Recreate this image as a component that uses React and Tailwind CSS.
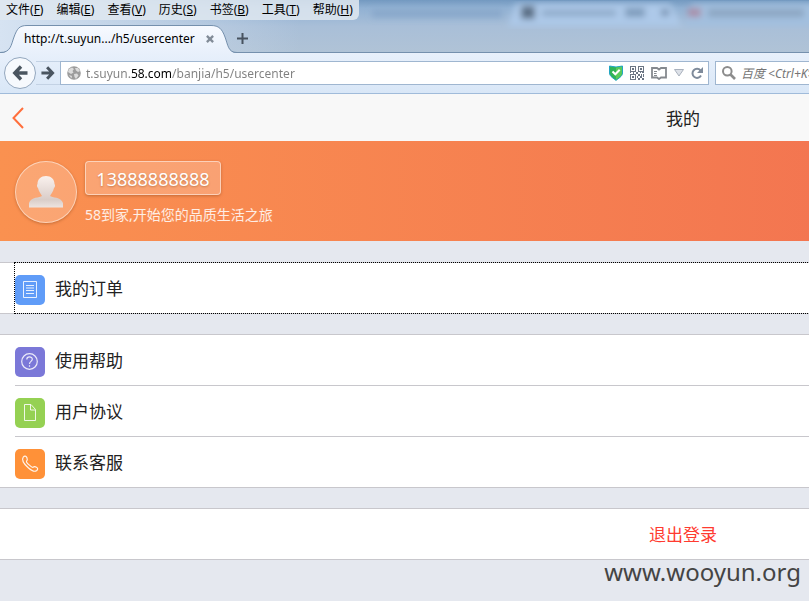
import React from 'react';

const menus = [
    { label: '文件', accessKey: 'F' },
    { label: '编辑', accessKey: 'E' },
    { label: '查看', accessKey: 'V' },
    { label: '历史', accessKey: 'S' },
    { label: '书签', accessKey: 'B' },
    { label: '工具', accessKey: 'T' },
    { label: '帮助', accessKey: 'H' },
];

function MenuBar() {
    return (
        <div className="relative flex h-5 items-center">
            <nav className="flex h-5 items-center gap-[13px] rounded-br-md bg-[#dfe7f0]/85 pl-1.5 pr-1.5 text-xs leading-5 text-black">
                {menus.map((menu) => (
                    <button key={menu.label} type="button" className="whitespace-nowrap">
                        {menu.label}(<span className="underline">{menu.accessKey}</span>)
                    </button>
                ))}
            </nav>
        </div>
    );
}

function GlassBackdrop() {
    return (
        <svg className="absolute inset-0 h-full w-full" aria-hidden="true">
            <defs>
                <linearGradient id="glass" x1="0" y1="0" x2="0" y2="1">
                    <stop offset="0" stopColor="#7399c0" />
                    <stop offset="0.15" stopColor="#91b1d3" />
                    <stop offset="0.5" stopColor="#a9bfd8" />
                    <stop offset="1" stopColor="#b0c3d6" />
                </linearGradient>
                <linearGradient id="glassLeft" x1="0" y1="0" x2="1" y2="0">
                    <stop offset="0" stopColor="#d6e3f2" />
                    <stop offset="1" stopColor="#d6e3f2" stopOpacity="0" />
                </linearGradient>
                <filter id="soft">
                    <feGaussianBlur stdDeviation="3" />
                </filter>
            </defs>
            <rect width="100%" height="100%" fill="url(#glass)" />
            <rect width="300" height="100%" fill="url(#glassLeft)" />
            <g filter="url(#soft)">
                <path d="M508 26 L516 4 H670 L682 26 Z" fill="#adc9e9" />
                <path d="M684 26 L692 4 H860 V26 Z" fill="#a3c0df" />
                <rect x="521" y="6" width="14" height="13" fill="#5c6f86" />
                <rect x="542" y="10" width="74" height="6" fill="#8ca8c7" />
                <rect x="625" y="8" width="20" height="9" fill="#7e9bbb" />
                <rect x="661" y="9" width="8" height="7" fill="#7893b2" />
                <rect x="688" y="8" width="13" height="9" fill="#a98fa9" />
                <rect x="708" y="9" width="96" height="8" fill="#8ba5c1" />
                <rect x="372" y="10" width="130" height="7" fill="#86a6c9" />
            </g>
        </svg>
    );
}

function TabStrip() {
    return (
        <div className="relative flex h-[33px] items-end border-b border-[#7590ad]">
            <div className="relative -mb-px flex h-7 w-[237px] items-center pl-6">
                <svg className="absolute inset-0 h-7 w-[237px]" viewBox="0 0 237 28" fill="none" aria-hidden="true">
                    <defs>
                        <linearGradient id="tab" x1="0" y1="0" x2="0" y2="1">
                            <stop offset="0" stopColor="#f7faff" />
                            <stop offset="1" stopColor="#e8f0fb" />
                        </linearGradient>
                    </defs>
                    <path
                        d="M0 28 C11 28 11 20 14 12 C17 4 19 .5 27 .5 H211 C219 .5 222 4 225 12 C228 20 228 28 237 28 Z"
                        fill="url(#tab)"
                    />
                    <path
                        d="M0 27.5 C11 27.5 11 20 14 12 C17 4 19 .5 27 .5 H211 C219 .5 222 4 225 12 C228 20 228 27.5 237 27.5"
                        stroke="#7590ad"
                    />
                </svg>
                <span className="relative w-[174px] whitespace-nowrap text-xs text-black">
                    http://t.suyun.../h5/usercenter
                </span>
                <button type="button" aria-label="关闭标签页" className="relative ml-2">
                    <svg width="8" height="8" viewBox="0 0 9 9" stroke="#828c98" strokeWidth="2.6">
                        <path d="M1 1 L8 8 M8 1 L1 8" />
                    </svg>
                </button>
            </div>
            <button type="button" aria-label="新标签页" className="relative mb-2 flex">
                <svg width="11" height="11" viewBox="0 0 11 11" stroke="#47525f" strokeWidth="2">
                    <path d="M5.5 0 V11 M0 5.5 H11" />
                </svg>
            </button>
        </div>
    );
}

function Arrow({ className }) {
    return (
        <svg className={className} viewBox="0 0 16 16" fill="none" stroke="#4a5560" strokeWidth="3.4" aria-hidden="true">
            <path d="M9 1.5 L2.8 8 L9 14.5 M3.5 8 H15.5" />
        </svg>
    );
}

function AddressIcons() {
    return (
        <div className="flex shrink-0 items-center gap-[7px]">
            <svg width="14" height="16" viewBox="0 0 14 16" aria-label="安全">
                <path d="M.5 1 L7 2 L13.5 1 V8 C13.5 11.5 9 13.500 7 15.5 C5 13.500 .5 11.5 .5 8 Z" fill="#2fb457" stroke="#22a5c4" />
                <path d="M7 2.500 L13 1.800 V8 C13 11 9 13 7 14.800 Z" fill="#58ca5a" />
                <path d="M3.500 6.500 L6.300 9.300 L10.700 4.800" fill="none" stroke="#fff" strokeWidth="2" />
            </svg>
            <svg width="14" height="14" viewBox="0 0 14 14" fill="#6b7583" aria-label="二维码">
                <path fillRule="evenodd" d="M0 0 H6 V6 H0 Z M1 1 V5 H5 V1 Z M8 0 H14 V6 H8 Z M9 1 V5 H13 V1 Z M0 8 H6 V14 H0 Z M1 9 V13 H5 V9 Z" />
                <path d="M2 2h2v2h-2z M10 2h2v2h-2z M2 10h2v2h-2z M8 8h2v2h-2z M11 8h1v2h-1z M13 8h1v3h-1z M7 10h1v2h-1z M10 10h2v2h-2z M8 12h2v2h-2z M12 12h2v2h-2z M6 6h2v2h-2z M0 6h1v1h-1z M3 6h1v2h-1z M10 6h1v1h-1z M12 6h2v1h-2z" />
            </svg>
            <svg width="16" height="13" viewBox="0 0 16 13" fill="none" stroke="#85898e" aria-label="阅读模式">
                <path d="M1 1 H6 L8 2.500 L10 1 H15 V10.500 H10 L8 12 L6 10.500 H1 Z" strokeWidth="1.8" />
                <path d="M3 4.500 H6 M3 6.500 H5.500 M3 8.500 H6" />
            </svg>
            <svg width="10" height="8" viewBox="0 0 10 8" aria-label="历史记录">
                <path d="M.5 .5 H9.500 L5 7 Z" fill="#dde1e8" stroke="#a9b1bd" />
            </svg>
            <button type="button" aria-label="刷新" className="flex">
                <svg width="12" height="12" viewBox="0 0 12 12" fill="none">
                    <path d="M9.500 3.500 A4.500 4.500 0 1 0 10 8.500" stroke="#7f8b9b" strokeWidth="2" />
                    <path d="M12 0 V6 H6 Z" fill="#7f8b9b" />
                </svg>
            </button>
        </div>
    );
}

function Toolbar() {
    return (
        <div className="flex h-[41px] items-center border-b border-[#a0bbda] bg-linear-to-b from-[#e8f0fb] to-[#d9e7f7] pl-1">
            <button
                type="button"
                aria-label="后退"
                className="flex h-8 w-8 shrink-0 items-center justify-center rounded-full border border-[#93a7be] bg-[#f6f9fd]"
            >
                <Arrow className="h-4 w-4" />
            </button>
            <button type="button" aria-label="前进" className="flex h-6 w-6 shrink-0 items-center justify-center border-y border-[#c3d2e4]">
                <Arrow className="h-3.5 w-3.5 rotate-180" />
            </button>
            <div className="flex h-6 w-[649px] shrink-0 items-center border border-[#9fb6d0] bg-white pl-1.5 pr-[5px]">
                <svg className="mr-[5px] h-3.5 w-3.5 shrink-0" viewBox="0 0 14 14" aria-hidden="true">
                    <circle cx="7" cy="7" r="6.800" fill="#9c9c9c" />
                    <path d="M2 3 L5 1.500 L7 3 L5.500 5 L6.500 6.500 L4 8 L1 6 Z M8 2 L11 2 L13 5 L11 6 L9 4.500 Z M7 8 L10 7.500 L11.500 9.500 L9 13 L7.500 11 Z M2 9 L5 10 L4.500 12.500 Z" fill="#dcdcdc" />
                </svg>
                {/* the gradient darkens only the domain part of the address */}
                <input
                    type="text"
                    aria-label="地址"
                    defaultValue="t.suyun.58.com/banjia/h5/usercenter"
                    className="min-w-0 flex-1 bg-[linear-gradient(to_right,#808080_44px,#000_44px,#000_86px,#808080_86px)] bg-clip-text pt-0.5 text-xs text-transparent caret-black outline-none"
                />
                <AddressIcons />
            </div>
            <label className="ml-1.5 flex h-6 w-60 shrink-0 items-center border border-[#9fb6d0] bg-white pl-1.5">
                <svg className="mr-[5px] h-3.5 w-3.5 shrink-0" viewBox="0 0 14 14" fill="none" stroke="#8c8c8c" aria-label="搜索">
                    <circle cx="5.300" cy="5.300" r="4.300" strokeWidth="2" />
                    <path d="M8.500 8.500 L13 13" strokeWidth="2.600" />
                </svg>
                <input
                    type="text"
                    placeholder="百度 <Ctrl+K>"
                    className="w-full bg-transparent pt-0.5 text-xs italic outline-none placeholder:text-[#757575]"
                />
            </label>
        </div>
    );
}

function PageHeader() {
    return (
        <header className="flex h-[47px] items-center bg-[#f8f8f8] px-3">
            <a href="#back" aria-label="返回" className="w-3">
                <svg className="h-[22px] w-3" viewBox="0 0 12 22" fill="none" stroke="#ff6f3c" strokeWidth="2">
                    <path d="M11 1 L1.500 11 L11 21" />
                </svg>
            </a>
            <h1 className="flex-1 pr-3 pt-0.5 text-center text-[17px] leading-6 text-[#222]">我的</h1>
        </header>
    );
}

function ProfileBanner() {
    return (
        <section className="flex h-[100px] items-start bg-linear-to-r from-[#fa9150] to-[#ee6250] px-[15px] pt-5">
            <div className="flex h-[62px] w-[62px] items-center justify-center rounded-full border border-white/50 bg-white/20 shadow-[0_1px_3px_rgba(120,60,20,0.4)]">
                <svg className="h-8 w-[34px]" viewBox="0 0 34 32" aria-hidden="true">
                    <defs>
                        <linearGradient id="person" x1="0" y1="0" x2="0" y2="1">
                            <stop offset="0" stopColor="#faf1ee" />
                            <stop offset="0.75" stopColor="#d9cdc8" />
                            <stop offset="1" stopColor="#ede4e0" />
                        </linearGradient>
                    </defs>
                    <path
                        d="M17 0 C22 0 25.500 3 25.500 8 C26.500 9 26 11.500 25 12 C24 16 22 18 21 20 C23 22 32 20.500 34 27 V31.500 H0 V27 C2 20.500 11 22 13 20 C12 18 10 16 9 12 C8 11.500 7.500 9 8.500 8 C8.500 3 12 0 17 0 Z"
                        fill="url(#person)"
                    />
                </svg>
            </div>
            <div className="ml-2">
                <p className="flex h-[34px] w-[136px] items-center justify-center rounded border border-white/50 bg-white/20 pt-0.5 text-lg text-white shadow-[0_1px_3px_rgba(120,60,20,0.4)] text-shadow-[0_1px_2px_rgba(120,60,20,0.4)]">
                    13888888888
                </p>
                <p className="mt-2.5 whitespace-nowrap text-sm leading-5 text-white/85">58到家,开始您的品质生活之旅</p>
            </div>
        </section>
    );
}

function OrderIcon() {
    return (
        <svg className="h-[30px] w-[30px]" viewBox="0 0 30 30" fill="none" stroke="#fff" aria-hidden="true">
            <path d="M8.500 6.500 H21.500 V22.500 H8.500 Z M11 10.500 H19 M11 13 H19 M11 15.500 H19 M11 18.500 H19" strokeOpacity="0.85" />
        </svg>
    );
}

function HelpIcon() {
    return (
        <svg className="h-[30px] w-[30px]" viewBox="0 0 30 30" fill="none" stroke="#fff" strokeOpacity="0.85" strokeWidth="1.2" aria-hidden="true">
            <circle cx="14.500" cy="14.500" r="7.800" />
            <path d="M11.800 12.500 C11.800 9 17.300 9 17.300 12.300 C17.300 14.500 14.500 14.300 14.500 17 M14.500 18.300 V19.800" />
        </svg>
    );
}

function AgreementIcon() {
    return (
        <svg className="h-[30px] w-[30px]" viewBox="0 0 30 30" fill="none" stroke="#fff" strokeOpacity="0.85" aria-hidden="true">
            <path d="M9.500 6.500 H16 L20.500 11.500 V22.500 H9.500 Z M15.500 7 V12 H20" />
        </svg>
    );
}

function PhoneIcon() {
    return (
        <svg className="h-[30px] w-[30px]" viewBox="0 0 30 30" fill="none" stroke="#fff" strokeOpacity="0.9" strokeWidth="1.2" strokeLinejoin="round" aria-hidden="true">
            <path d="M8.300 8 C9.500 6.500 11 6.800 11.800 8.500 C12.500 10.300 13 11 11.500 12.300 C10.800 13.200 17 19 18 18.300 C19.300 17 20 17.300 21.500 18.200 C23 19 23 20.300 21.700 21.500 C20 23 17 22 13.500 19 C9.500 15.500 5.800 11.500 8.300 8 Z" />
        </svg>
    );
}

const helpItems = [
    { label: '使用帮助', href: '#help', color: 'bg-[#7b78d8]', Icon: HelpIcon },
    { label: '用户协议', href: '#agreement', color: 'bg-[#95d153]', Icon: AgreementIcon },
    { label: '联系客服', href: '#service', color: 'bg-[#ff9138]', Icon: PhoneIcon },
];

function ListRow({ item, className }) {
    const { Icon } = item;

    return (
        <a href={item.href} className={`flex items-center gap-2.5 pt-1 text-[17px] leading-7 text-[#222] ${className}`}>
            <span className={`h-[30px] w-[30px] rounded-[5px] ${item.color}`}>
                <Icon />
            </span>
            <span className="pb-0.5">{item.label}</span>
        </a>
    );
}

export default function App() {
    return (
        <div className="min-h-screen overflow-hidden bg-[#e5e8ef] font-['Noto_Sans','Noto_Sans_CJK_SC',sans-serif]">
            <div className="relative">
                <GlassBackdrop />
                <MenuBar />
                <TabStrip />
            </div>
            <Toolbar />

            {/* the page keeps its desktop width and runs past narrow windows */}
            <main className="min-w-[1366px]">
                <PageHeader />
                <ProfileBanner />

                <section className="mt-[21px] border-y border-[#c8c7cc] bg-white pl-3.5">
                    <ListRow
                        item={{ label: '我的订单', href: '#orders', color: 'bg-[#609cf8]', Icon: OrderIcon }}
                        className="-my-px h-[52px] border border-dotted border-black"
                    />
                </section>

                <ul className="mt-5 border-y border-[#c8c7cc] bg-white pl-[15px]">
                    {helpItems.map((item, index) => (
                        <li key={item.label} className={index > 0 ? 'border-t border-[#c8c7cc]' : ''}>
                            <ListRow item={item} className="h-[50px]" />
                        </li>
                    ))}
                </ul>

                <button
                    type="button"
                    className="mt-5 block h-[52px] w-full border-y border-[#c8c7cc] bg-white pt-0.5 text-[17px] leading-6 text-[#ff3b30]"
                >
                    退出登录
                </button>
            </main>

            <footer className="pr-2 text-right text-2xl leading-6 text-[#444]">www.wooyun.org</footer>
        </div>
    );
}
